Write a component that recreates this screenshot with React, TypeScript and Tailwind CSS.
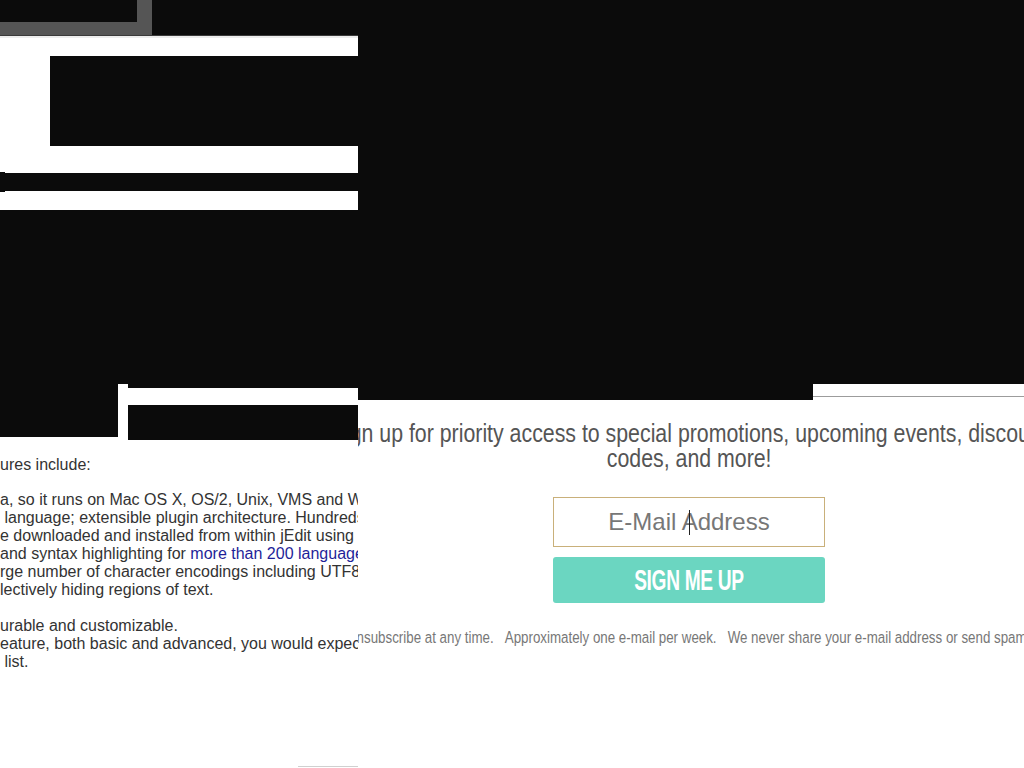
import React from "react";

const K = "bg-[#0b0b0b]";

function LeftColumn() {
  return (
    <div className="relative flex h-[768px] w-[358px] shrink-0 flex-col overflow-hidden bg-white">
      {/* header */}
      <div className="flex h-[36px] border-b border-[#3a3a3a]">
        <div className="w-[152px] bg-[#555555]">
          <div className={`h-[22px] w-[137px] ${K}`} />
        </div>
        <div className={`flex-1 ${K}`} />
      </div>
      <div className="h-[2px] bg-[#ededed]" />
      <div className={`ml-[50px] mt-[18px] h-[90px] ${K}`} />
      <div className="relative mt-[27px] h-[18px]">
        <div className={`h-full ${K}`} />
        <div className={`absolute left-0 top-[-1px] h-[20px] w-[5px] ${K}`} />
      </div>
      <div className={`mt-[19px] h-[174px] ${K}`} />
      <div className="flex h-[56px]">
        <div className="flex w-[118px] flex-col">
          <div className={`h-[53px] ${K}`} />
        </div>
        <div className="ml-[10px] flex flex-1 flex-col">
          <div className={`h-[4px] ${K}`} />
          <div className="h-[17px]" />
          <div className={`h-[35px] ${K}`} />
        </div>
      </div>
      <div className="mt-[16px] whitespace-nowrap font-['Liberation_Sans',Arial,sans-serif] text-[16px] leading-[18px] text-[#333333]">
        <p>ures include:</p>
        <div className="mt-[17px]">
          <p>a, so it runs on Mac OS X, OS/2, Unix, VMS and Windows.</p>
          <p>&nbsp;language; extensible plugin architecture. Hundreds of plugins are available.</p>
          <p>e downloaded and installed from within jEdit using the plugin manager.</p>
          <p>
            and syntax highlighting for{" "}
            <a className="text-[#1f1f99]">more than 200 languages</a>.
          </p>
          <p>rge number of character encodings including UTF8 and Unicode.</p>
          <p>lectively hiding regions of text.</p>
        </div>
        <div className="mt-[18px]">
          <p>urable and customizable.</p>
          <p>eature, both basic and advanced, you would expect to find in a text editor.</p>
          <p>&nbsp;list.</p>
        </div>
      </div>
      <div className="mt-auto mb-[1px] ml-[298px] h-[1px] bg-[#d0d0d0]" />
    </div>
  );
}

function RightPanel() {
  return (
    <div className="flex h-[768px] flex-1 flex-col overflow-hidden bg-white">
      <div className={`h-[384px] ${K}`} />
      <div className="flex h-[16px]">
        <div className={`w-[455px] ${K}`} />
        <div className="flex-1 pt-[12px]">
          <div className="h-[1px] bg-[#9c9c9c]" />
        </div>
      </div>
      <div className="ml-[-49px] flex w-[760px] flex-col items-center">
        <p className="mt-[21px] inline-block scale-x-[0.82] whitespace-nowrap text-center font-['Liberation_Sans',Arial,sans-serif] text-[26px] leading-[25px] text-[#555555]">
          Sign up for priority access to special promotions, upcoming events, discount
          <br />
          codes, and more!
        </p>
        <div className="relative mt-[26px] h-[50px] w-[272px]">
          <input
            type="email"
            placeholder="E-Mail Address"
            className="h-full w-full border border-[#c9b07a] bg-white text-center font-['Liberation_Sans',Arial,sans-serif] text-[24px] text-[#555] outline-none placeholder:text-[#777777]"
          />
          <div className="pointer-events-none absolute left-[136px] top-[13px] h-[25px] w-[1px] bg-[#222]" />
        </div>
        <button className="mt-[10px] flex h-[46px] w-[272px] items-center justify-center rounded-[3px] bg-[#6bd6c1]">
          <span className="inline-block scale-x-[0.66] font-['Liberation_Sans',Arial,sans-serif] text-[29px] font-bold leading-none tracking-[-0.5px] text-white">
            SIGN ME UP
          </span>
        </button>
        <p className="mt-[26px] inline-block scale-x-[0.82] whitespace-nowrap text-center font-['Liberation_Sans',Arial,sans-serif] text-[16.25px] leading-[16px] text-[#777777]">
          Unsubscribe at any time.&nbsp;&nbsp;&nbsp;Approximately one e-mail per week.&nbsp;&nbsp;&nbsp;We never share your e-mail address or send spam.
        </p>
      </div>
    </div>
  );
}

export default function App() {
  return (
    <div className="flex h-[768px] w-[1024px] overflow-hidden bg-white">
      <LeftColumn />
      <RightPanel />
    </div>
  );
}
